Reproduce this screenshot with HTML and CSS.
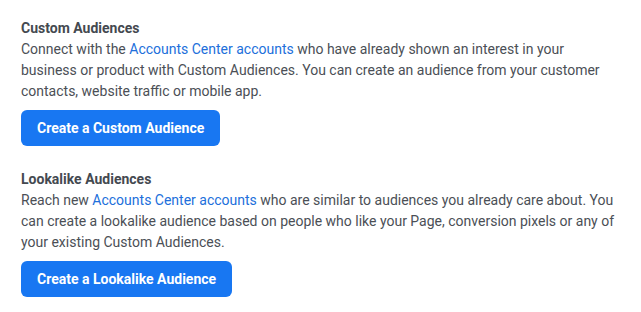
FILE: index.html
```html
<!DOCTYPE html>
<html lang="en">
<head>
    <meta charset="UTF-8">
    <title>Audiences</title>
    <link rel="stylesheet" href="styles.css">
</head>
<body>
    <div class="audiences">
        <div class="section">
            <h3 class="title">Custom Audiences</h3>
            <p class="desc">Connect with the <a href="javascript:;">Accounts Center accounts</a> who have already shown an interest in your business or product with Custom Audiences. You can create an audience from your customer contacts, website traffic or mobile app.</p>
            <button class="btn">Create a Custom Audience</button>
        </div>
        <div class="section">
            <h3 class="title">Lookalike Audiences</h3>
            <p class="desc">Reach new <a href="javascript:;">Accounts Center accounts</a> who are similar to audiences you already care about. You can create a lookalike audience based on people who like your Page, conversion pixels or any of your existing Custom Audiences.</p>
            <button class="btn">Create a Lookalike Audience</button>
        </div>
    </div>
</body>
</html>
```

FILE: styles.css
```css
*{
    margin: 0;
    padding: 0;
}
body{
    font: 14px/21px Roboto, Arial, sans-serif;
    color: #4b4f56;
    background: #fff;
}
.audiences{
    width: 600px;
    padding: 18px 0 0 21px;
}
.section{
    margin-bottom: 23px;
}
.title{
    font-size: 14px;
    font-weight: 700;
    color: #444950;
}
a{
    color: #216fdb;
    text-decoration: none;
}
.btn{
    display: block;
    margin-top: 8px;
    height: 36px;
    padding: 0 16px;
    border: 0;
    border-radius: 6px;
    background-color: #1877f2;
    color: #fff;
    font: 700 14px Roboto, Arial, sans-serif;
}
```
